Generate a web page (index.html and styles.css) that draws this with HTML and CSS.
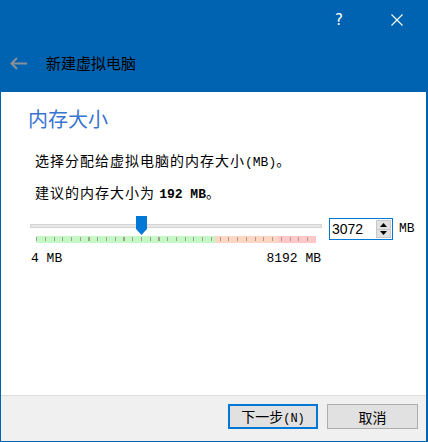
FILE: index.html
```html
<!DOCTYPE html>
<html lang="zh-CN">
<head>
<meta charset="utf-8">
<title>新建虚拟电脑</title>
<link rel="stylesheet" href="styles.css">
</head>
<body>
<div class="window">
  <header class="titlebar">
    <div class="controls">
      <div class="ctl ctl-help">?</div>
      <div class="ctl ctl-close">
        <svg width="12" height="12" viewBox="0 0 12 12"><path d="M0.5 0.5L11.5 11.5M11.5 0.5L0.5 11.5" stroke="#fff" stroke-width="1.1" fill="none"/></svg>
      </div>
    </div>
    <div class="nav">
      <svg class="back" width="17" height="13" viewBox="0 0 17 13"><path d="M1.5 6.5H17M7 1L1.5 6.5L7 12" stroke="#8a8f98" stroke-width="2" fill="none"/></svg>
      <span class="nav-title">新建虚拟电脑</span>
    </div>
  </header>
  <main class="content">
    <h1 class="heading">内存大小</h1>
    <p class="line line-1">选择分配给虚拟电脑的内存大小<span class="mono">(MB)</span>。</p>
    <p class="line line-2">建议的内存大小为 <b class="mono strong">192 MB</b>。</p>
    <div class="mem-row">
      <div class="slider">
        <div class="track"></div>
        <div class="thumb"><svg width="11" height="19" viewBox="0 0 11 19"><path d="M0 0H11V13L5.5 19L0 13Z" fill="#0078d7"/></svg></div>
        <div class="ticks"></div>
        <div class="scale"><span>4 MB</span><span>8192 MB</span></div>
      </div>
      <div class="spin">
        <span class="spin-value">3072</span>
        <div class="spin-btns">
          <div class="spin-btn"><svg width="7" height="4" viewBox="0 0 7 4"><path d="M3.5 0L7 4H0Z" fill="#000"/></svg></div>
          <div class="spin-btn"><svg width="7" height="4" viewBox="0 0 7 4"><path d="M0 0H7L3.5 4Z" fill="#000"/></svg></div>
        </div>
      </div>
      <span class="unit mono">MB</span>
    </div>
  </main>
  <footer class="footer">
    <button class="btn btn-default">下一步<span class="mono">(N)</span></button>
    <button class="btn">取消</button>
  </footer>
</div>
</body>
</html>
```

FILE: styles.css
```css
* { box-sizing: border-box; }
html, body { margin: 0; padding: 0; }
body {
  width: 428px;
  height: 442px;
  overflow: hidden;
  font-family: "Noto Sans CJK SC", sans-serif;
  background: #0063b1;
}
.window {
  width: 428px;
  height: 442px;
  border: 1px solid #0063b1;
  border-right-width: 2px;
  background: #0063b1;
  display: flex;
  flex-direction: column;
}
.titlebar {
  height: 91px;
  flex: none;
  display: flex;
  flex-direction: column;
}
.controls {
  height: 38px;
  display: flex;
  justify-content: flex-end;
  padding-right: 6px;
}
.ctl {
  width: 46px;
  height: 38px;
  display: flex;
  align-items: center;
  justify-content: center;
  color: #fff;
}
.ctl-help {
  margin-right: 12px;
  font-family: "DejaVu Sans", sans-serif;
  font-size: 15px;
  padding-bottom: 1px;
}
.nav {
  display: flex;
  align-items: center;
  height: 56px;
  margin-top: -4px;
  padding-left: 9px;
}
.back { flex: none; }
.nav-title {
  margin-left: 19px;
  font-size: 15px;
  color: #000;
  line-height: 20px;
}
.content {
  flex: 1;
  background: #fff;
  padding: 15px 0 0 27px;
}
.heading {
  margin: 0;
  font-size: 20px;
  font-weight: 400;
  line-height: 24px;
  color: #3875d2;
}
.line {
  margin: 0 0 0 7px;
  font-size: 14px;
  letter-spacing: 1px;
  line-height: 20px;
  color: #000;
}
.line-1 { margin-top: 19px; }
.line-2 { margin-top: 9px; }
.mono {
  font-family: "Liberation Mono", monospace;
  font-size: 13px;
  letter-spacing: 0;
}
.strong { font-weight: 700; }
.mem-row {
  display: flex;
  align-items: flex-start;
  margin-top: 13px;
  margin-left: 2px;
}
.slider {
  position: relative;
  width: 292px;
  padding-top: 6px;
}
.track {
  height: 4px;
  background: #e7e7e7;
  border: 1px solid #d5d5d5;
}
.thumb {
  position: absolute;
  left: 106px;
  top: -2px;
  line-height: 0;
}
.ticks {
  margin: 8px 6px 0 6px;
  height: 7px;
  background:
    repeating-linear-gradient(to right, #a39b92 0 1px, transparent 1px 8.75px) 0 1px / 100% 4px no-repeat,
    linear-gradient(to right, #c4f8c4 0 179px, #ffd6c2 179px 242px, #ffc7c7 242px 280px);
}
.scale {
  display: flex;
  justify-content: space-between;
  margin-top: 8px;
  padding: 0 1px;
  font-family: "Liberation Mono", monospace;
  font-size: 13px;
  line-height: 15px;
  color: #000;
}
.spin {
  margin-left: 7px;
  width: 64px;
  height: 22px;
  border: 1px solid #0078d7;
  display: flex;
  align-items: center;
  padding: 0 1px 0 2px;
}
.spin-value {
  flex: 1;
  font-family: "Liberation Sans", sans-serif;
  font-size: 14px;
  color: #000;
}
.spin-btns {
  width: 15px;
  height: 18px;
  display: flex;
  flex-direction: column;
  background: #e1e1e1;
  border: 1px solid #c8c8c8;
}
.spin-btn {
  flex: 1;
  display: flex;
  align-items: center;
  justify-content: center;
  line-height: 0;
}
.spin-btn + .spin-btn { border-top: 1px solid #c8c8c8; }
.unit {
  margin-left: 6px;
  line-height: 22px;
  color: #000;
}
.footer {
  height: 46px;
  flex: none;
  background: #f0f0f0;
  border-top: 1px solid #dcdcdc;
  display: flex;
  justify-content: flex-end;
  align-items: flex-start;
  padding: 8px 8px 0 0;
  gap: 9px;
}
.btn {
  width: 91px;
  height: 25px;
  margin: 0;
  padding: 0;
  background: #e1e1e1;
  border: 1px solid #adadad;
  font-family: "Noto Sans CJK SC", sans-serif;
  font-size: 14px;
  color: #000;
  line-height: 20px;
}
.btn .mono { font-size: 12px; }
.btn-default {
  width: 90px;
  border: 2px solid #0078d7;
}
```
